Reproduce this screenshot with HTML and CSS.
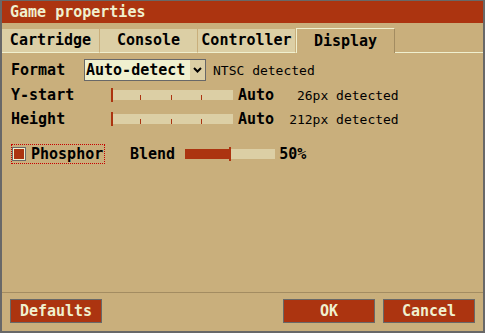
FILE: index.html
```html
<!DOCTYPE html>
<html lang="en">
<head>
  <meta charset="UTF-8" />
  <title>Game properties</title>
  <link rel="stylesheet" href="styles.css">
</head>
<body>

  <div class="dialog">
    <div class="titlebar">Game properties</div>

    <div class="tabs">
      <div class="tab">Cartridge</div>
      <div class="tab">Console</div>
      <div class="tab">Controller</div>
      <div class="tab active">Display</div>
      <div class="tab-rest"></div>
    </div>

    <div class="panel">
      <div class="row row-format">
        <span class="label label-format">Format</span>
        <div class="popup">
          <span class="popup-value">Auto-detect</span>
          <span class="popup-arrow">
            <svg width="9" height="6" viewBox="0 0 9 6"><polyline points="1,1 4.5,4.5 8,1" fill="none" stroke="#000" stroke-width="2"/></svg>
          </span>
        </div>
        <span class="info info-ntsc">NTSC detected</span>
      </div>

      <div class="row row-slider">
        <span class="label label-wide">Y-start</span>
        <div class="slider">
          <span class="fill" style="width: 0px"></span>
          <span class="handle"></span>
          <span class="tick" style="left: 29px"></span>
          <span class="tick" style="left: 60px"></span>
          <span class="tick" style="left: 90px"></span>
        </div>
        <span class="value">Auto</span>
        <span class="info info-px"> 26px detected</span>
      </div>

      <div class="row row-slider row-height">
        <span class="label label-wide">Height</span>
        <div class="slider">
          <span class="fill" style="width: 0px"></span>
          <span class="handle"></span>
          <span class="tick" style="left: 29px"></span>
          <span class="tick" style="left: 60px"></span>
          <span class="tick" style="left: 90px"></span>
        </div>
        <span class="value">Auto</span>
        <span class="info info-px">212px detected</span>
      </div>

      <div class="row row-phosphor">
        <div class="checkbox focused">
          <span class="check"></span>
          <span class="check-label">Phosphor</span>
        </div>
        <span class="label blend-label">Blend</span>
        <div class="slider slider-blend">
          <span class="fill" style="width: 44px"></span>
          <span class="handle"></span>
        </div>
        <span class="value percent">50%</span>
      </div>
    </div>

    <div class="footer">
      <button class="btn">Defaults</button>
      <div class="spacer"></div>
      <button class="btn">OK</button>
      <button class="btn">Cancel</button>
    </div>
  </div>

</body>
</html>
```

FILE: styles.css
```css
* {
  box-sizing: border-box;
}

body {
  margin: 0;
  padding: 0;
  background: #c9af7c;
  font-family: 'DejaVu Sans Mono', 'Liberation Mono', monospace;
  font-size: 15px;
  font-weight: bold;
  color: #000;
}

.dialog {
  width: 485px;
  height: 333px;
  display: flex;
  flex-direction: column;
  background: #c9af7c;
  border: solid #686868;
  border-width: 1px 2px 2px 2px;
}

.titlebar {
  height: 22px;
  line-height: 22px;
  padding-left: 8px;
  background: #ac3410;
  color: #f0f0cf;
}

/* tabs */
.tabs {
  display: flex;
  align-items: flex-end;
  margin-top: 5px;
}

.tab {
  width: 98px;
  height: 24px;
  line-height: 22px;
  text-align: center;
  background: #dccfa5;
  border-right: 1px solid #c9af7c;
  border-bottom: 1px solid #f0f0cf;
}

.tab.active {
  width: 99px;
  height: 25px;
  line-height: 24px;
  background: #c9af7c;
  border-top: 1px solid #f0f0cf;
  border-left: 1px solid #f0f0cf;
  border-right: 1px solid #a38c61;
  border-bottom: none;
}

.tab-rest {
  flex: 1;
  border-bottom: 1px solid #f0f0cf;
}

/* panel rows */
.panel {
  padding: 6px 0 0 9px;
}

.row {
  display: flex;
  align-items: center;
}

.row-format {
  height: 22px;
}

.row-slider {
  height: 14px;
  margin-top: 7px;
}

.row-height {
  margin-top: 10px;
}

.row-phosphor {
  height: 20px;
  margin-top: 18px;
}

.label-format {
  width: 73px;
}

.label-wide {
  width: 100px;
}

.popup {
  display: flex;
  width: 122px;
  height: 22px;
  border: 1px solid #686868;
  background: #f0f0cf;
}

.popup-value {
  flex: 1;
  padding-left: 1px;
  line-height: 20px;
}

.popup-arrow {
  width: 15px;
  display: flex;
  align-items: center;
  justify-content: center;
  background: #dccfa5;
}

.info {
  font-size: 13px;
  font-weight: normal;
  white-space: pre;
}

.info-ntsc {
  margin-left: 7px;
}

.info-px {
  margin-left: 15px;
}

.value {
  margin-left: 5px;
}

/* sliders */
.slider {
  position: relative;
  display: flex;
  align-items: center;
  width: 122px;
  height: 10px;
  background: #dccfa5;
}

.slider .fill {
  height: 100%;
  background: #ac3410;
}

.slider .handle {
  width: 2px;
  height: 14px;
  flex-shrink: 0;
  background: #ac3410;
}

.slider .tick {
  position: absolute;
  bottom: 0;
  width: 1px;
  height: 5px;
  background: #ac3410;
}

.slider-blend {
  width: 90px;
  margin-left: 10px;
}

.percent {
  margin-left: 4px;
}

/* checkbox */
.checkbox {
  display: flex;
  align-items: center;
  width: 94px;
  height: 20px;
  border: 1px dotted transparent;
}

.checkbox.focused {
  border-color: #c80000;
}

.check {
  width: 14px;
  height: 14px;
  border: 1px solid #686868;
  background: #ac3410;
  box-shadow: inset 0 0 0 1px #f0f0cf;
}

.check-label {
  margin-left: 5px;
}

.blend-label {
  margin-left: 25px;
}

/* footer */
.footer {
  margin-top: auto;
  display: flex;
  gap: 8px;
  padding: 6px 8px 8px 8px;
  border-top: 1px solid #a38c61;
}

.spacer {
  flex: 1;
}

.btn {
  width: 92px;
  height: 24px;
  padding: 0;
  border: 1px solid #686868;
  background: #ac3410;
  color: #f0f0cf;
  font-family: inherit;
  font-size: 15px;
  font-weight: bold;
}
```
